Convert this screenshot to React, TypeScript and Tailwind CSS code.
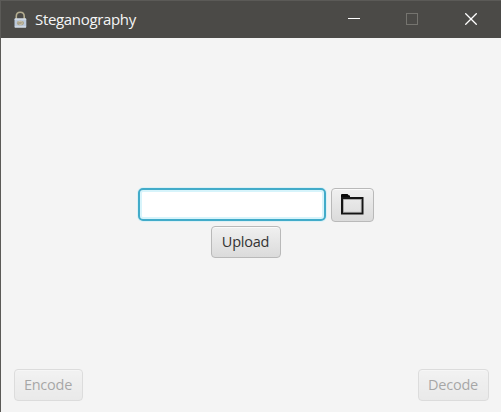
import type { ReactNode } from "react";

const buttonBase =
  "flex items-center justify-center rounded-[4px] border border-[#b9b9b9] bg-gradient-to-b from-[#f0f0f0] to-[#dbdbdb] shadow-[inset_0_1px_0_#fafafa]";

function Button({ className, label, children }: { className: string; label?: string; children: ReactNode }) {
  return (
    <button type="button" aria-label={label} className={`${buttonBase} ${className}`}>
      {children}
    </button>
  );
}

function LockIcon() {
  return (
    <svg width="14" height="18" viewBox="0 0 14 18" fill="none">
      <path d="M3.3 9V5.2C3.3 0 11.2 0 11.2 5.2V9" stroke="#b5ae91" strokeWidth="1.6" />
      <rect x="1.5" y="7.5" width="11.8" height="9" rx="0.7" fill="#bccadc" />
      <path d="M1.8 8h11.2M1.8 16h11.2" stroke="#e2e7ed" />
      <ellipse cx="7.4" cy="12" rx="3.6" ry="2.3" fill="#aaa38d" />
      <path d="M4.9 11.4c1-2 3.5-1 4.7-.2M6.4 13.4c1.2.3 2.8-.1 3-1.4" stroke="#dbd4bd" strokeWidth="0.7" />
    </svg>
  );
}

function FolderIcon() {
  return (
    <svg width="23" height="21" viewBox="0 0 23 21" fill="none">
      <path d="M0 1Q0 0 1 0H6.5L8 1.5H9V4.5H0Z" fill="#080808" />
      <rect x="1" y="4" width="20.5" height="15.5" stroke="#151515" strokeWidth="2" />
      <rect x="2.3" y="5.3" width="17.9" height="12.9" stroke="#858585" strokeWidth="0.6" />
    </svg>
  );
}

function TitleBar() {
  return (
    <header className="flex h-[38px] shrink-0 items-center border-t border-[#5b5a57] bg-[#4b4a47] pl-3 text-white">
      <LockIcon />
      <h1 className="ml-2 pb-[2px] text-[15px] leading-5 font-normal tracking-[-0.33px] text-[#f6f6f6]">Steganography</h1>
      <div className="mr-px mb-px ml-auto flex items-center">
        <button type="button" aria-label="Minimize" className="flex w-[58px] justify-center">
          <svg width="12" height="12" viewBox="0 0 12 12"><path d="M0 5.5h12" stroke="white" /></svg>
        </button>
        <button type="button" aria-label="Maximize" disabled className="flex w-[58px] justify-center">
          <svg width="12" height="12" viewBox="0 0 12 12" fill="none"><rect x=".5" y=".5" width="11" height="11" stroke="#75746f" /></svg>
        </button>
        <button type="button" aria-label="Close" className="flex w-[59px] justify-center">
          <svg width="12" height="12" viewBox="0 0 12 12"><path d="M.3.3l11.4 11.4M11.7.3L.3 11.7" stroke="white" strokeWidth="1.3" /></svg>
        </button>
      </div>
    </header>
  );
}

export default function App() {
  return (
    <div className="flex h-[412px] w-[501px] flex-col overflow-hidden border-l border-[#5b5a57] bg-[#f4f4f4] font-['Open_Sans','Noto_Sans',sans-serif]">
      <TitleBar />
      <main className="flex flex-1 flex-col pr-3 pl-[13px] text-[14.5px] text-[#333333]">
        <div className="mt-[150px] ml-[124px] flex gap-[5px]">
          <input
            aria-label="File path"
            className="h-[33px] w-[188px] rounded-[5px] border-2 border-[#42abc9] bg-white shadow-[inset_0_0_0_2px_#d7f4fb,0_0_0_1px_#dcf1f6] outline-none"
          />
          <Button className="h-[34px] w-[43px] pr-px pb-[2px]" label="Browse"><FolderIcon /></Button>
        </div>
        <div className="mt-1 ml-[197px] flex">
          <Button className="h-8 w-[70px] pr-px"><span className="tracking-[-0.25px]">Upload</span></Button>
        </div>
        <footer className="mt-auto mb-[11px] flex justify-between">
          <Button className="h-8 w-[69px] pr-px opacity-40"><span className="tracking-[-0.25px]">Encode</span></Button>
          <Button className="h-8 w-[71px] pr-px opacity-40"><span className="tracking-[-0.2px]">Decode</span></Button>
        </footer>
      </main>
    </div>
  );
}
